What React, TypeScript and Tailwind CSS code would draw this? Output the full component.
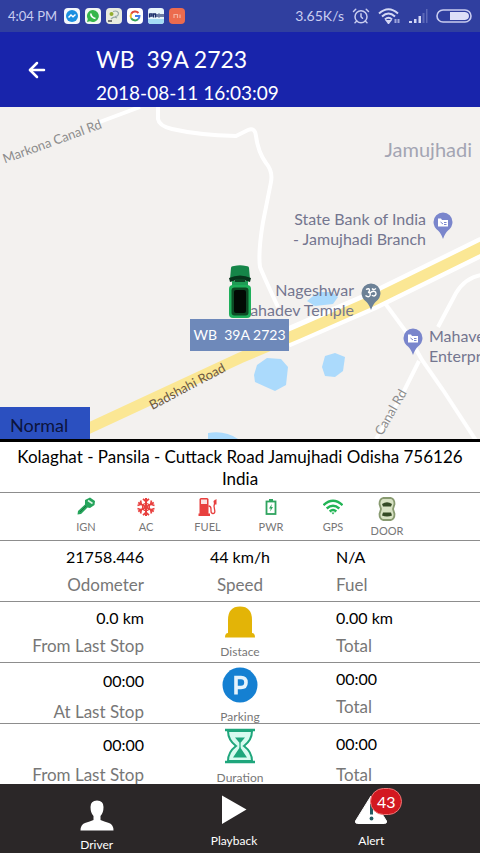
import React from 'react';
import { ArrowLeft, AlarmClock } from 'lucide-react';

const KeyIcon = () => (
  <svg viewBox="0 0 20 20" className="w-5 h-5">
    <path d="M9 3 L14 0.5 L19 4 L18.5 8 L14 11 L11.5 10.5 L5 17 L1.5 17.5 L2 14 L9 7.5 Z" fill="#25a45b" />
    <path d="M12 3.5 L16.5 6.5" stroke="#d9f3e3" strokeWidth="1.6" />
    <path d="M10 9 L4 15" stroke="#157a3e" strokeWidth="1" />
  </svg>
);

const SnowIcon = () => (
  <svg viewBox="0 0 20 20" className="w-5 h-5" fill="none" stroke="#e8403f" strokeWidth="2">
    <path d="M10 1 V19 M2.2 5.5 L17.8 14.5 M2.2 14.5 L17.8 5.5" />
    <path d="M7 1.8 L10 4.5 L13 1.8 M7 18.2 L10 15.5 L13 18.2 M1.5 8.5 L5.2 7.2 L4.6 3.5 M18.5 11.5 L14.8 12.8 L15.4 16.5 M1.5 11.5 L5.2 12.8 L4.6 16.5 M18.5 8.5 L14.8 7.2 L15.4 3.5" strokeWidth="1.7" />
    <circle cx="10" cy="10" r="3.5" strokeWidth="1.2" />
  </svg>
);

const FuelIcon = () => (
  <svg viewBox="0 0 20 20" className="w-5 h-5">
    <path d="M1.5 2.5 Q1.5 1 3 1 H9 Q10.5 1 10.5 2.5 V17 H1.5 Z" fill="#e8403f" />
    <rect x="3" y="2.5" width="6" height="4.5" fill="#fbe3e3" />
    <rect x="0.5" y="16.5" width="11.5" height="2.5" fill="#e8403f" />
    <path d="M10.5 9 Q13 9 13 12 V14 Q13 16.5 15 16.5 Q17 16.5 16.8 14 L16 9 L17.5 3" fill="none" stroke="#e8403f" strokeWidth="1.3" />
    <path d="M15.5 4 L18.5 2 L18.5 7.5 L16 7.5 Z" fill="#e8403f" />
  </svg>
);

const PowerIcon = () => (
  <svg viewBox="0 0 20 20" className="w-5 h-5">
    <rect x="5.5" y="4.5" width="9" height="12.5" fill="none" stroke="#2fa45f" strokeWidth="1.8" />
    <rect x="8" y="2" width="4" height="2.5" fill="#2fa45f" />
    <path d="M10.8 7 L8 11.5 H9.7 L9.2 14.5 L12 10 H10.3 Z" fill="#2fa45f" />
  </svg>
);

const SignalIcon = () => (
  <svg viewBox="0 0 20 20" className="w-5 h-5" fill="none" stroke="#22b455" strokeWidth="2.4">
    <path d="M0.5 8.2 Q10 -0.5 19.5 8.2" />
    <path d="M3.7 11.5 Q10 6 16.3 11.5" />
    <path d="M6.7 14.5 Q10 11.7 13.3 14.5" />
    <path d="M8.3 15.5 L10 17.5 L11.7 15.5 Z" fill="#22b455" stroke="none" />
  </svg>
);

const DoorIcon = () => (
  <svg viewBox="0 0 18 24" className="w-5 h-6">
    <path d="M5 1 H13 Q16.5 2 16.5 7 L15 12 L16.5 17 Q16.5 22 13 23 H5 Q1.5 22 1.5 17 L3 12 L1.5 7 Q1.5 2 5 1 Z" fill="#d8e2c4" stroke="#889a70" strokeWidth="1.8" />
    <path d="M4 7 Q9 3.5 14 7 L13 9.5 H5 Z M5 15.5 H13 L14 18.5 Q9 20.5 4 18.5 Z" fill="#344a25" />
  </svg>
);

const BellIcon = () => (
  <svg viewBox="0 0 30 32" className="w-[30px] h-8">
    <path d="M3 27 V14 Q3 0.5 15 0.5 Q27 0.5 27 14 V27 Q30 27 30 31.5 H0 Q0 27 3 27 Z" fill="#e3b407" />
  </svg>
);

const ParkingIcon = () => (
  <svg viewBox="0 0 36 36" className="w-9 h-9">
    <circle cx="18" cy="18" r="17.5" fill="#1580d2" />
    <path d="M14 27.5 V10.5 H19 Q24 10.5 24 15.5 Q24 20.5 19 20.5 H14" fill="none" stroke="#e6f3fc" strokeWidth="3.6" />
  </svg>
);

const HourglassIcon = () => (
  <svg viewBox="0 0 32 36" className="w-8 h-9">
    <path d="M4 3 Q4 12 12 18 Q4 24 4 33 H28 Q28 24 20 18 Q28 12 28 3 Z" fill="#d9fbf0" stroke="#1fa67c" strokeWidth="2" />
    <path d="M1 2 H31 M1 34 H31" stroke="#1fa67c" strokeWidth="2.6" />
    <path d="M11 9.5 H21 L16 15.5 Z M16 19 L23 29.5 H9 Z" fill="#1fa67c" />
    <path d="M16 15 V20" stroke="#1fa67c" strokeWidth="1.2" />
  </svg>
);

const DriverIcon = () => (
  <svg viewBox="0 0 34 31" className="w-[34px] h-[31px]">
    <path d="M17 0.5 Q23.5 0.5 23.5 7 Q23.5 13 20.5 16 V20 Q24 21.5 29 23 Q33.5 24.5 33.5 30.5 H0.5 Q0.5 24.5 5 23 Q10 21.5 13.5 20 V16 Q10.5 13 10.5 7 Q10.5 0.5 17 0.5 Z" fill="#fff" />
  </svg>
);

const PlayIcon = () => (
  <svg viewBox="0 0 34 31" className="w-[34px] h-[31px]">
    <path d="M5 1.5 L29.5 15.5 L5 30 Z" fill="#fff" />
  </svg>
);

const AlertIcon = () => (
  <svg viewBox="0 0 34 31" className="w-[34px] h-[31px]">
    <path d="M17 2 L32.5 27 Q33 29.5 30.5 29.5 H3.5 Q1 29.5 1.5 27 Z" fill="#fff" stroke="#fff" strokeLinejoin="round" />
    <path d="M17.5 10 V20.5" stroke="#245b62" strokeWidth="3" />
    <circle cx="17.5" cy="24.5" r="1.9" fill="#245b62" />
  </svg>
);

const Pin = ({ color, kind }: { color: string; kind: 'shop' | 'temple' }) => (
  <svg viewBox="0 0 20 28" className="w-5 h-7">
    <path d="M10 0.5 A9.5 9.5 0 0 1 19.5 10 Q19.5 15 15 18.5 Q12 21 10 27 Q8 21 5 18.5 Q0.5 15 0.5 10 A9.5 9.5 0 0 1 10 0.5 Z" fill={color} />
    {kind === 'shop' ? (
      <>
        <path d="M5 6.5 H8 L9 8 H15 V14.5 H5 Z" fill="#fff" />
        <path d="M7.5 10 L10 12 M11 10.5 H13.5 M11 12.5 H13.5" stroke={color} strokeWidth="1" />
      </>
    ) : (
      <path d="M5 6.5 Q8.5 4.5 8.5 7.5 Q8.5 9 7 9.3 Q10 9.5 9 12.5 Q7.5 15 4.5 12.5 M9 10 Q12 7 14.5 9 Q16 12 13 13 Q11.5 13 11 12 M11 5.5 Q12.5 7.5 15 5.5" fill="none" stroke="#fff" strokeWidth="1.4" />
    )}
  </svg>
);

const VehicleIcon = () => (
  <svg viewBox="0 0 26 54" className="w-[26px] h-[54px]">
    <path d="M4 3 Q4 1 7 1 Q13 -0.5 19 1 Q22 1 22 3 L23 14 H3 Z" fill="#158548" />
    <path d="M2 13 Q13 8 24 13 L23 17 Q13 13 3 17 Z" fill="#07341b" />
    <path d="M5 16 H21 V23 H5 Z" fill="#1e9c55" />
    <path d="M8 14 H18 V17 H8 Z" fill="#0a4423" />
    <rect x="2" y="20" width="22" height="33" rx="4" fill="#1faf5b" />
    <rect x="4.5" y="22.5" width="17" height="28" rx="3" fill="#0c4a24" />
    <rect x="7" y="25" width="12" height="23" rx="2" fill="#020a04" />
  </svg>
);

const indicators = [
  { name: 'IGN', icon: <KeyIcon /> },
  { name: 'AC', icon: <SnowIcon /> },
  { name: 'FUEL', icon: <FuelIcon /> },
  { name: 'PWR', icon: <PowerIcon /> },
  { name: 'GPS', icon: <SignalIcon /> },
  { name: 'DOOR', icon: <DoorIcon /> },
];

const tripRows = [
  { name: 'Distace', icon: <BellIcon />, left: '0.0 km', leftLabel: 'From Last Stop', right: '0.00 km', leftClass: 'pt-0.5 leading-7', rightClass: 'pt-0.5 leading-7' },
  { name: 'Parking', icon: <ParkingIcon />, left: '00:00', leftLabel: 'At Last Stop', right: '00:00', leftClass: 'pt-0.5 leading-[31px]', rightClass: 'pt-0.5 leading-7' },
  { name: 'Duration', icon: <HourglassIcon />, left: '00:00', leftLabel: 'From Last Stop', right: '00:00', leftClass: 'pt-1.5 leading-[30px]', rightClass: 'pt-1 leading-[31px]' },
];

const StatusBar = () => (
  <div className="h-8 shrink-0 bg-[#303f9f] text-[#c9cdf0] text-sm flex items-center justify-between px-2">
    <div className="flex items-center gap-[5px]">
      <span className="text-[13px] mr-0.5">4:04 PM</span>
      <svg viewBox="0 0 16 16" className="w-4 h-4">
        <rect width="16" height="16" rx="4" fill="#f4f8fc" />
        <circle cx="8" cy="8" r="6" fill="#1a8fe0" />
        <path d="M4.5 9.5 L7 7 L9 8.7 L11.5 6.5" fill="none" stroke="#fff" strokeWidth="1.5" />
      </svg>
      <svg viewBox="0 0 16 16" className="w-4 h-4">
        <rect width="16" height="16" rx="4" fill="#f2f8f3" />
        <path d="M8 2 A6 6 0 1 1 5 13.3 L2 14 L2.8 11 A6 6 0 0 1 8 2 Z" fill="#36b64b" />
        <path d="M5.8 5.5 Q6 9.5 10.5 10.5" fill="none" stroke="#fff" strokeWidth="1.7" />
      </svg>
      <svg viewBox="0 0 16 16" className="w-4 h-4">
        <rect width="16" height="16" rx="4" fill="#e9ecdf" />
        <path d="M7 3.5 Q11 2 12.5 5 Q12.5 8.5 9 8.5 M5 11 Q8 8 11 10" fill="none" stroke="#9aaba6" strokeWidth="1.2" />
        <circle cx="5.5" cy="6" r="2" fill="#93ad2e" />
        <path d="M2 13 H6" stroke="#444" strokeWidth="1.4" />
      </svg>
      <svg viewBox="0 0 16 16" className="w-4 h-4" fill="none" strokeWidth="2">
        <rect width="16" height="16" rx="4" fill="#fff" />
        <path d="M11.5 5 A4.5 4.5 0 0 0 4.2 5.8" stroke="#e04a3a" />
        <path d="M4.2 5.8 A4.5 4.5 0 0 0 4.2 10.2" stroke="#f0b92c" />
        <path d="M4.2 10.2 A4.5 4.5 0 0 0 11 11.3" stroke="#37a457" />
        <path d="M11 11.3 A4.5 4.5 0 0 0 12.5 8 H8" stroke="#4180e8" />
      </svg>
      <svg viewBox="0 0 16 16" className="w-4 h-4">
        <rect width="16" height="16" rx="3" fill="#e8f5fb" />
        <path d="M0 11 H16 V13 Q16 16 13 16 H3 Q0 16 0 13 Z" fill="#a5dcf5" />
        <path d="M1.5 5.5 V9.5 M1.5 6 H4 V8 H2 M5.5 9.5 V6 H7.5 V9.5" stroke="#1b2d69" strokeWidth="1.3" fill="none" />
        <path d="M9 6 V9 M11 5.5 V9.5 M13 6 V9 M15 6 V9" stroke="#1b2d69" strokeWidth="1.2" />
      </svg>
      <svg viewBox="0 0 16 16" className="w-4 h-4">
        <rect width="16" height="16" rx="4" fill="#ec6b4e" />
        <path d="M5 10 V6.5 H8.5 V10 M11 6.5 V10" fill="none" stroke="#f5b29f" strokeWidth="1.2" />
      </svg>
    </div>
    <div className="flex items-center gap-2">
      <span>3.65K/s</span>
      <AlarmClock className="w-[18px] h-[18px]" strokeWidth={2} />
      <svg viewBox="0 0 22 16" className="w-[22px] h-4" fill="none" stroke="#d4d8f5" strokeWidth="2">
        <path d="M1 5.5 Q10.5 -3 20 5.5 M4 8.5 Q10.5 2.5 17 8.5 M7 11.5 Q10.5 8 14 11.5" />
        <path d="M9 13 L10.5 15 L12 13 Z" fill="#d4d8f5" />
        <path d="M17.5 11 V15 M20.5 11 V15" stroke="#9da5dc" />
      </svg>
      <svg viewBox="0 0 20 16" className="w-5 h-4" fill="#d4d8f5">
        <path d="M1 13 h3 v2 h-3 z M6 11 h2.5 v4 h-2.5 z M10.5 8 h2.5 v7 h-2.5 z" />
        <path d="M14.5 5 h2 v10 h-2 z M18 1 h1.5 v14 h-1.5 z" fill="#5c68b8" />
      </svg>
      <svg viewBox="0 0 36 14" className="w-9 h-3.5">
        <rect x="1" y="1" width="34" height="12" rx="6" fill="none" stroke="#c9cdf0" strokeWidth="1.6" />
        <path d="M14 3 H29 Q33 3.5 33 7 Q33 10.5 29 11 H14 Z" fill="#dde0f8" />
      </svg>
    </div>
  </div>
);

const MapView = () => (
  <div className="relative flex-1 min-h-[300px] overflow-hidden bg-[#f3f1ef] border-b-3 border-black text-base leading-5 text-[#74768f] whitespace-nowrap">
    <svg viewBox="0 0 480 332" preserveAspectRatio="xMinYMin slice" className="absolute inset-0 w-full h-full" fill="none">
      <g fill="#abdafc">
        <path d="M254 268 L257 258 L267 251 L281 252 L288 260 L286 278 L275 284 L266 280 L255 275 Z" />
        <path d="M322 260 L325 249 L335 246 L345 250 L343 264 L335 270 L325 269 Z" />
        <path d="M307 194 L318 185 L332 185 L338 190 L333 197 L315 199 Z" />
        <path d="M208 332 V326 Q225 323 238 332 Z" />
      </g>
      <g stroke="#fff" strokeWidth="4">
        <path d="M97 16 L140 0" />
        <path d="M158 0 V12 Q159 19 172 22 Q198 28 236 29 L248 23 Q255 20 256 29 Q258 45 266 56 Q273 64 271 75 L263 115 Q258 145 260 160 Q264 170 278 200" />
        <path d="M376 184 L407 226 L422 253 L443 283 L477 335" />
        <path d="M419 254 L401 290 L376 332" />
        <path d="M438 220 L456 186 Q466 170 482 168" />
      </g>
      <path d="M286 231 L372 194 L484 139" stroke="#fff" strokeWidth="20" />
      <path d="M85 323 L240 251 L297 227 L372 194 L484 139" stroke="#fbe794" strokeWidth="11" />
    </svg>

    <span className="absolute left-0 top-6 text-[13px] text-[#8c8c8c] -rotate-[20deg]">Markona Canal Rd</span>
    <span className="absolute right-2 top-7 text-xl text-[#a3a5b3]">Jamujhadi</span>
    <div className="absolute right-[54px] top-[102px] text-right">State Bank of India<br />- Jamujhadi Branch</div>
    <div className="absolute right-[126px] top-[173px] text-right">Nageshwar<br />Mahadev Temple</div>
    <div className="absolute left-[429px] top-[219px]">Mahave<br />Enterpr</div>
    <span className="absolute left-[145px] top-[269px] text-[13px] text-[#6d5a43] -rotate-[28deg]">Badshahi Road</span>
    <span className="absolute left-[365px] top-[295px] text-[13px] text-[#8c8c8c] -rotate-[60deg]">Canal Rd</span>

    <div className="absolute left-[433px] top-[105px]"><Pin color="#7a86cc" kind="shop" /></div>
    <div className="absolute left-[361px] top-[176px]"><Pin color="#6c8196" kind="temple" /></div>
    <div className="absolute left-[403px] top-[221px]"><Pin color="#7a86cc" kind="shop" /></div>

    <div className="absolute left-[190px] top-[158px] flex flex-col items-center">
      <VehicleIcon />
      <div className="w-[99px] h-8 bg-[#6e89ba] text-white text-sm flex items-center justify-center whitespace-pre">WB  39A 2723</div>
    </div>
    <div className="absolute left-0 bottom-0 w-[90px] h-8 pt-1 pl-2.5 bg-[#2b50c0] text-[#0c143c] text-lg flex items-center">Normal</div>
  </div>
);

const App: React.FC = () => {
  return (
    <div className="h-screen min-h-[800px] flex flex-col bg-white text-black font-['Lato',sans-serif]">
      <StatusBar />

      {/* Header */}
      <header className="h-[75px] shrink-0 bg-[#1824ab] text-white flex items-center">
        <button aria-label="Back" className="ml-[25px] mr-[47px]">
          <ArrowLeft className="w-6 h-6" strokeWidth={2.5} />
        </button>
        <div className="pt-2.5">
          <h1 className="text-[23px] leading-9 whitespace-pre">WB  39A 2723</h1>
          <p className="text-[19px] leading-8">2018-08-11 16:03:09</p>
        </div>
      </header>

      <MapView />

      {/* Address */}
      <p className="shrink-0 px-3 pt-1 pb-0.5 text-[17px] leading-[22px] text-center">
        Kolaghat - Pansila - Cuttack Road Jamujhadi Odisha 756126 India
      </p>

      {/* Sensors */}
      <div className="h-12 shrink-0 border-t border-[#8d8d8d] pt-1 pl-14 pr-[69px] grid grid-cols-[60fr_60fr_63fr_64fr_60fr_48fr] text-[11px] text-[#777]">
        {indicators.map(item => (
          <div key={item.name} className="flex flex-col items-center gap-0.5">
            {item.icon}
            <span className="leading-4">{item.name}</span>
          </div>
        ))}
      </div>

      {/* Readings */}
      <div className="h-[61px] shrink-0 border-t border-[#8d8d8d] pt-0.5 grid grid-cols-3 text-base leading-7">
        <div className="px-4 text-right">
          <p>21758.446</p>
          <p className="text-[17px] text-[#777]">Odometer</p>
        </div>
        <div className="text-center">
          <p>44 km/h</p>
          <p className="text-[17px] text-[#777]">Speed</p>
        </div>
        <div className="px-4">
          <p>N/A</p>
          <p className="text-[17px] text-[#777]">Fuel</p>
        </div>
      </div>

      {tripRows.map(row => (
        <div key={row.name} className="h-[61px] shrink-0 overflow-hidden border-t border-[#8d8d8d] grid grid-cols-3 text-base">
          <div className={`px-4 text-right ${row.leftClass}`}>
            <p>{row.left}</p>
            <p className="text-[17px] text-[#777]">{row.leftLabel}</p>
          </div>
          <div className="pt-1 flex flex-col items-center justify-self-center">
            {row.icon}
            <span className="pt-1 text-xs leading-5 text-[#777]">{row.name}</span>
          </div>
          <div className={`px-4 ${row.rightClass}`}>
            <p>{row.right}</p>
            <p className="text-[17px] text-[#777]">Total</p>
          </div>
        </div>
      ))}

      {/* Bottom bar */}
      <nav className="h-[69px] shrink-0 bg-[#2b2728] text-white text-xs leading-4 pl-7 pr-10 grid grid-cols-3 items-start">
        <button className="pt-4 flex flex-col items-center gap-1.5">
          <DriverIcon />
          <span>Driver</span>
        </button>
        <button className="pt-2.5 flex flex-col items-center gap-2">
          <PlayIcon />
          <span>Playback</span>
        </button>
        <button className="pt-2.5 flex flex-col items-center gap-2">
          <span className="relative">
            <AlertIcon />
            <span className="absolute -top-1.5 left-4 w-8 h-[27px] rounded-full border border-[#e77] bg-[#d31820] text-base flex items-center justify-center">43</span>
          </span>
          <span>Alert</span>
        </button>
      </nav>
    </div>
  );
};

export default App;
